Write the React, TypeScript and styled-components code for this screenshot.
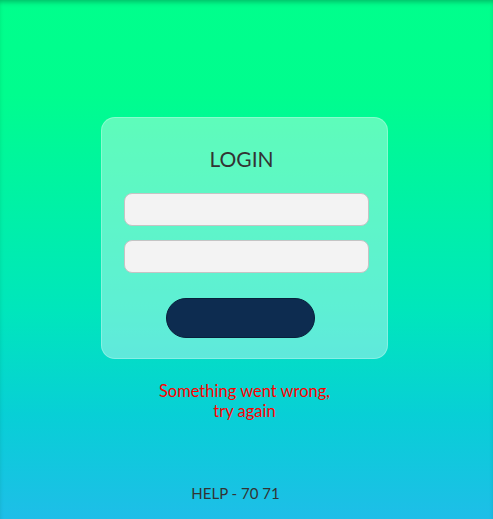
import React from "react";
import styled, { createGlobalStyle } from "styled-components";

const Global = createGlobalStyle`
  html, body { margin: 0; padding: 0; }
  body { font-family: "Lato", "Open Sans", sans-serif; }
`;

const Page = styled.div`
  position: relative;
  min-height: 519px;
  box-sizing: border-box;
  display: flex;
  flex-direction: column;
  align-items: center;
  padding: 117px 4px 0 0;
  background: linear-gradient(180deg, #00ff8c 0%, #00fd8e 18%, #00e6bc 60%, #08cfd6 80%, #1ebee8 100%);
  box-shadow: inset 0 4px 5px -2px rgba(0, 60, 30, 0.35);
`;

const Card = styled.div`
  width: 287px;
  box-sizing: border-box;
  padding: 26px 18px 20px 22px;
  border-radius: 14px;
  background: rgba(255, 255, 255, 0.37);
  border: 1px solid rgba(255, 255, 255, 0.25);
  display: flex;
  flex-direction: column;
  align-items: center;
`;

const Title = styled.h1`
  margin: 0 10px 19px 0;
  font-size: 21px;
  line-height: 30px;
  font-weight: 400;
  color: #333;
`;

const Input = styled.input<{ $gap: number }>`
  width: 100%;
  height: 33px;
  box-sizing: border-box;
  margin: 0 0 ${(p) => p.$gap}px;
  border: 1px solid #c4c4c4;
  border-radius: 8px;
  background: #f3f3f3;
  outline: none;
`;

const Button = styled.button`
  width: 149px;
  height: 40px;
  margin-right: 12px;
  border-radius: 20px;
  border: 1px solid #07203a;
  background: #0d2c50;
  cursor: pointer;
`;

const ErrorText = styled.p`
  margin: 22px 0 0;
  font-size: 16.5px;
  line-height: 20px;
  color: #ff0000;
  text-align: center;
`;

const Help = styled.p`
  margin: 62px 18px 0 0;
  font-size: 15px;
  line-height: 20px;
  color: #333;
`;

export default function App() {
  return (
    <>
      <Global />
      <Page>
        <Card>
          <Title>LOGIN</Title>
          <Input $gap={14} />
          <Input type="password" $gap={25} />
          <Button />
        </Card>
        <ErrorText>
          Something went wrong,
          <br />
          try again
        </ErrorText>
        <Help>HELP - 70 71</Help>
      </Page>
    </>
  );
}
